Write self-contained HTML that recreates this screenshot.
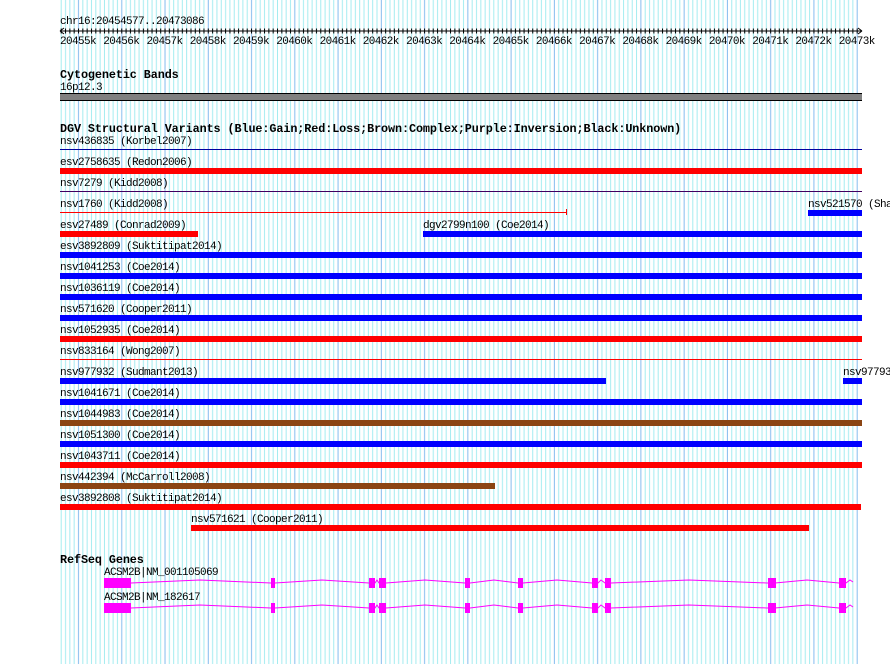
<!DOCTYPE html>
<html><head><meta charset="utf-8"><style>
html,body{margin:0;padding:0;background:#fff;width:890px;height:664px;overflow:hidden}
svg{display:block}
text{font-family:"Liberation Mono","DejaVu Sans Mono",monospace;font-size:11px;letter-spacing:-0.6px;fill:#000}
.b{font-weight:bold;font-size:11.8px;letter-spacing:-0.1px}
</style></head><body>
<svg width="890" height="664" xmlns="http://www.w3.org/2000/svg">
<defs>
<pattern id="g" patternUnits="userSpaceOnUse" x="60.7" y="0" width="43.26" height="10">
<rect x="0" y="0" width="1" height="10" fill="#a4ecf0"/>
<rect x="4.33" y="0" width="1" height="10" fill="#a4ecf0"/>
<rect x="8.65" y="0" width="1" height="10" fill="#a4ecf0"/>
<rect x="12.98" y="0" width="1" height="10" fill="#a4ecf0"/>
<rect x="17.3" y="0" width="1" height="10" fill="#84bcee"/>
<rect x="21.63" y="0" width="1" height="10" fill="#a4ecf0"/>
<rect x="25.96" y="0" width="1" height="10" fill="#a4ecf0"/>
<rect x="30.28" y="0" width="1" height="10" fill="#a4ecf0"/>
<rect x="34.61" y="0" width="1" height="10" fill="#a4ecf0"/>
<rect x="38.93" y="0" width="1" height="10" fill="#a4ecf0"/>
</pattern>
<pattern id="t" patternUnits="userSpaceOnUse" x="60.7" y="0" width="4.326" height="10">
<rect x="0" y="0" width="1" height="10" fill="#000"/>
</pattern>
</defs>
<rect x="60" y="0" width="799" height="664" fill="url(#g)"/>

<text x="60" y="24">chr16:20454577..20473086</text>
<rect x="60" y="30.5" width="801" height="1" fill="#000"/>
<rect x="60" y="28.5" width="799" height="5" fill="url(#t)"/>
<path d="M60 31 L64 28 M60 31 L64 34 M862 31 L858 28 M862 31 L858 34" stroke="#000" stroke-width="1"/>
<g text-anchor="middle">
<text x="78" y="44">20455k</text><text x="121.3" y="44">20456k</text><text x="164.5" y="44">20457k</text><text x="207.8" y="44">20458k</text><text x="251" y="44">20459k</text><text x="294.3" y="44">20460k</text><text x="337.6" y="44">20461k</text><text x="380.8" y="44">20462k</text><text x="424.1" y="44">20463k</text><text x="467.3" y="44">20464k</text><text x="510.6" y="44">20465k</text><text x="553.9" y="44">20466k</text><text x="597.1" y="44">20467k</text><text x="640.4" y="44">20468k</text><text x="683.6" y="44">20469k</text><text x="726.9" y="44">20470k</text><text x="770.2" y="44">20471k</text><text x="813.4" y="44">20472k</text><text x="856.7" y="44">20473k</text>
</g>

<text class="b" x="60" y="78">Cytogenetic Bands</text>
<text x="60" y="90">16p12.3</text>
<rect x="60" y="93" width="802" height="8" fill="#808080"/>
<rect x="60" y="93" width="802" height="1" fill="#000"/>
<rect x="60" y="100" width="802" height="1" fill="#000"/>

<text class="b" x="60" y="132">DGV Structural Variants (Blue:Gain;Red:Loss;Brown:Complex;Purple:Inversion;Black:Unknown)</text>

<text x="60" y="144">nsv436835 (Korbel2007)</text>
<rect x="60" y="149" width="802" height="1" fill="#0000a0"/>
<text x="60" y="165">esv2758635 (Redon2006)</text>
<rect x="60" y="168" width="802" height="6" fill="#f00"/>
<text x="60" y="186">nsv7279 (Kidd2008)</text>
<rect x="60" y="191" width="802" height="1" fill="#400060"/>
<text x="60" y="207">nsv1760 (Kidd2008)</text>
<rect x="60" y="212" width="507" height="1" fill="#f00"/>
<rect x="566" y="209" width="1" height="6" fill="#f00"/>
<text x="808" y="207">nsv521570 (Sha</text>
<rect x="808" y="210" width="54" height="6" fill="#00f"/>
<text x="60" y="228">esv27489 (Conrad2009)</text>
<rect x="60" y="231" width="138" height="6" fill="#f00"/>
<text x="423" y="228">dgv2799n100 (Coe2014)</text>
<rect x="423" y="231" width="439" height="6" fill="#00f"/>
<text x="60" y="249">esv3892809 (Suktitipat2014)</text>
<rect x="60" y="252" width="802" height="6" fill="#00f"/>
<text x="60" y="270">nsv1041253 (Coe2014)</text>
<rect x="60" y="273" width="802" height="6" fill="#00f"/>
<text x="60" y="291">nsv1036119 (Coe2014)</text>
<rect x="60" y="294" width="802" height="6" fill="#00f"/>
<text x="60" y="312">nsv571620 (Cooper2011)</text>
<rect x="60" y="315" width="802" height="6" fill="#00f"/>
<text x="60" y="333">nsv1052935 (Coe2014)</text>
<rect x="60" y="336" width="802" height="6" fill="#f00"/>
<text x="60" y="354">nsv833164 (Wong2007)</text>
<rect x="60" y="359" width="802" height="1" fill="#f00"/>
<text x="60" y="375">nsv977932 (Sudmant2013)</text>
<rect x="60" y="378" width="546" height="6" fill="#00f"/>
<text x="843" y="375">nsv97793</text>
<rect x="843" y="378" width="19" height="6" fill="#00f"/>
<text x="60" y="396">nsv1041671 (Coe2014)</text>
<rect x="60" y="399" width="802" height="6" fill="#00f"/>
<text x="60" y="417">nsv1044983 (Coe2014)</text>
<rect x="60" y="420" width="802" height="6" fill="#8b4513"/>
<text x="60" y="438">nsv1051300 (Coe2014)</text>
<rect x="60" y="441" width="802" height="6" fill="#00f"/>
<text x="60" y="459">nsv1043711 (Coe2014)</text>
<rect x="60" y="462" width="802" height="6" fill="#f00"/>
<text x="60" y="480">nsv442394 (McCarroll2008)</text>
<rect x="60" y="483" width="435" height="6" fill="#8b4513"/>
<text x="60" y="501">esv3892808 (Suktitipat2014)</text>
<rect x="60" y="504" width="801" height="6" fill="#f00"/>
<text x="191" y="522">nsv571621 (Cooper2011)</text>
<rect x="191" y="525" width="618" height="6" fill="#f00"/>

<text class="b" x="60" y="563">RefSeq Genes</text>
<text x="104" y="575">ACSM2B|NM_001105069</text>
<text x="104" y="600">ACSM2B|NM_182617</text>
<g id="gene" fill="#f0f" stroke="none">
<polyline fill="none" stroke="#f0f" stroke-width="1" points="131,583 200,580 271,583 275,583 322,580 369,583 375,583 377,580 379,583 386,583 425,580 465,583 470,583 494,580 518,583 523,583 557,580 592,583 598,583 601,580 605,583 611,583 689,580 767,583 775,583 807,580 839,583 846,583 850,580 853,582"/>
<rect x="104" y="578" width="27" height="10"/>
<rect x="271" y="578" width="4" height="10"/>
<rect x="369" y="578" width="6" height="10"/>
<rect x="379" y="578" width="7" height="10"/>
<rect x="465" y="578" width="5" height="10"/>
<rect x="518" y="578" width="5" height="10"/>
<rect x="592" y="578" width="6" height="10"/>
<rect x="605" y="578" width="6" height="10"/>
<rect x="768" y="578" width="8" height="10"/>
<rect x="839" y="578" width="7" height="10"/>
</g>
<use href="#gene" y="25"/>
</svg>
</body></html>
